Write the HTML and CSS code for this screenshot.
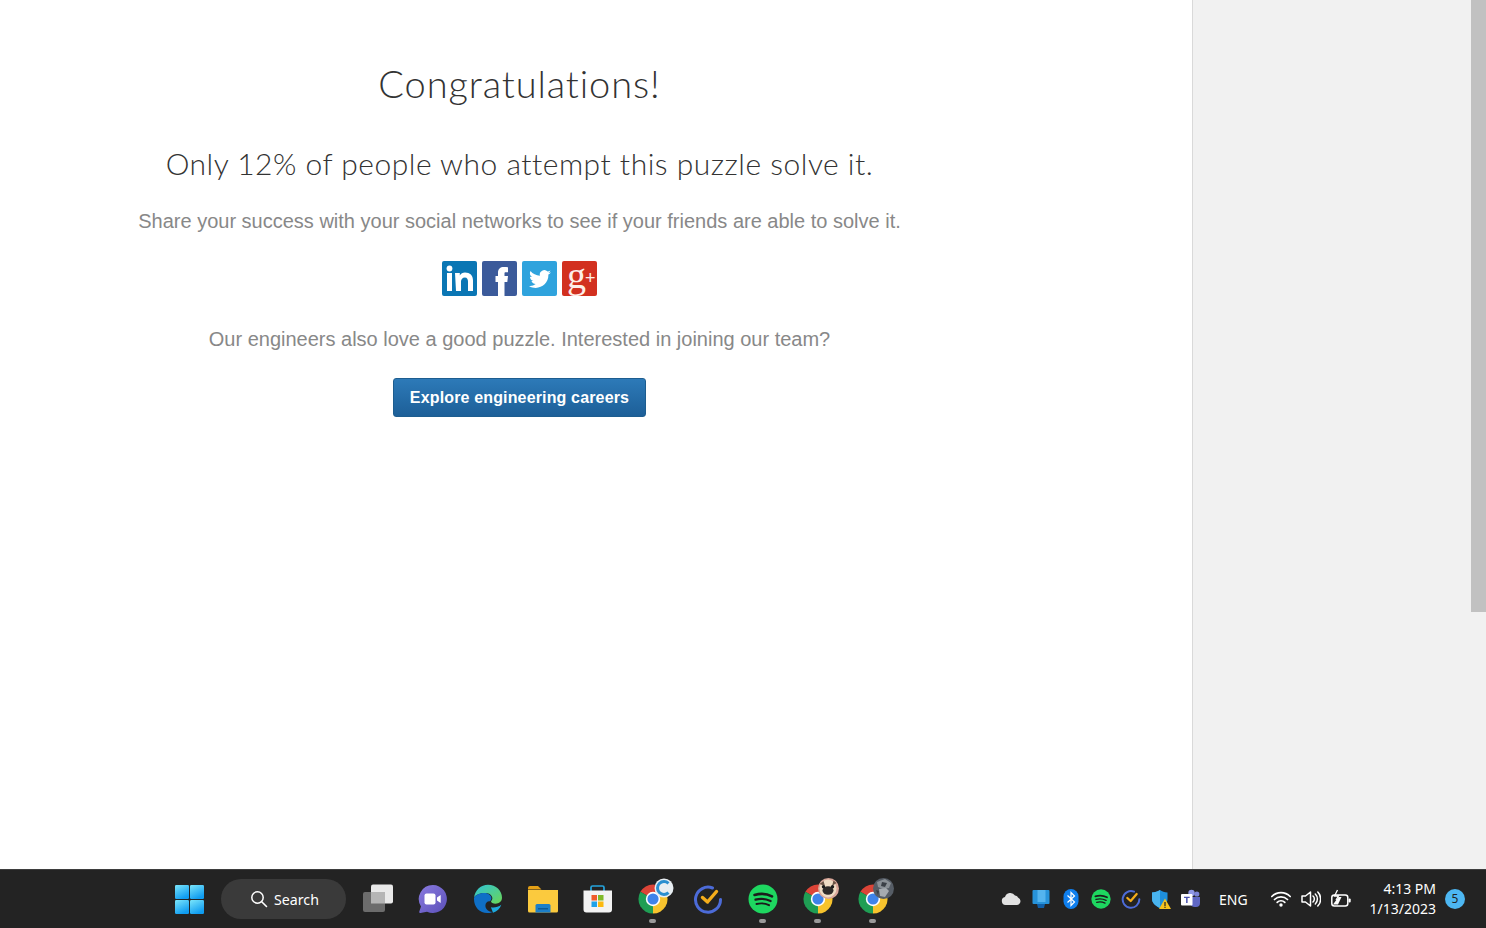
FILE: index.html
```html
<!DOCTYPE html>
<html lang="en">
<head>
<meta charset="utf-8">
<title>Congratulations</title>
<link rel="stylesheet" href="styles.css">
</head>
<body>
<svg class="defs" width="0" height="0" aria-hidden="true">
  <defs>
    <linearGradient id="winG" x1="0" y1="0" x2="0.500" y2="1"><stop offset="0" stop-color="#7be6fb"/><stop offset="1" stop-color="#0f9cf0"/></linearGradient>
    <linearGradient id="meetG" x1="0" y1="0" x2="1" y2="1"><stop offset="0" stop-color="#8a7be0"/><stop offset="1" stop-color="#5b50b8"/></linearGradient>
    <linearGradient id="edgeG" x1="0" y1="0" x2="1" y2="1"><stop offset="0" stop-color="#2fc3d8"/><stop offset="1" stop-color="#6ad655"/></linearGradient>
    <symbol id="chrome" viewBox="0 0 30 30">
      <path d="M15 15 L2.400 7.700 A14.600 14.600 0 0 1 27.600 7.700 Z" fill="#dc4437"/>
      <path d="M15 15 L27.600 7.700 A14.600 14.600 0 0 1 15 29.600 Z" fill="#f7c32d"/>
      <path d="M15 15 L15 29.600 A14.600 14.600 0 0 1 2.400 7.700 Z" fill="#1f9e54"/>
      <circle cx="15" cy="15" r="7.200" fill="#fff"/>
      <circle cx="15" cy="15" r="5.600" fill="#3f83ea"/>
    </symbol>
    <symbol id="tick" viewBox="0 0 30 30">
      <path d="M19.500 4 A12.500 12.500 0 1 0 27.500 15.500" fill="none" stroke="#4c6bd8" stroke-width="3" stroke-linecap="round"/>
      <path d="M9.500 13.500 L14.500 18 L23.500 7.500" fill="none" stroke="#f5ad1b" stroke-width="3.400" stroke-linecap="round" stroke-linejoin="round"/>
    </symbol>
    <symbol id="spotify" viewBox="0 0 30 30">
      <circle cx="15" cy="15" r="14.500" fill="#1ed760"/>
      <path d="M6.500 11 C12 9.400 19 9.800 24 12.400" fill="none" stroke="#1b1b1b" stroke-width="2.600" stroke-linecap="round"/>
      <path d="M7.500 15.600 C12 14.400 18 14.800 22.600 17" fill="none" stroke="#1b1b1b" stroke-width="2.200" stroke-linecap="round"/>
      <path d="M8.500 20 C12.500 19 17.500 19.400 21 21.200" fill="none" stroke="#1b1b1b" stroke-width="1.900" stroke-linecap="round"/>
    </symbol>
  </defs>
</svg>

<div class="screen">
  <div class="page">
    <main class="main">
      <section class="content">
        <h1 class="title">Congratulations!</h1>
        <h2 class="subtitle">Only 12% of people who attempt this puzzle solve it.</h2>
        <p class="copy share">Share your success with your social networks to see if your friends are able to solve it.</p>
        <div class="socials">
          <a class="social linkedin" aria-label="LinkedIn"><svg viewBox="0 0 35 35" width="35" height="35"><circle cx="7.500" cy="7.500" r="2.900" fill="#fff"/><rect x="5" y="12" width="5" height="18" fill="#fff"/><path d="M13 12h4.800v2.500c1-1.700 2.900-2.900 5.200-2.900 5 0 8 2.800 8 8V30h-5v-9.400c0-2.500-.9-4.200-3.100-4.200-2.300 0-3.900 1.700-3.900 4.200V30h-5z" fill="#fff"/></svg></a>
          <a class="social facebook" aria-label="Facebook"><svg viewBox="0 0 35 35" width="35" height="35"><path d="M16 35V21h-2.500v-6H16v-3.500C16 8 18.300 6 21.800 6c1.800 0 3.700.2 4.200.3v5h-2.500c-.9 0-1 .6-1 1.500V15H26l-.7 6H22.500v14z" fill="#fff"/></svg></a>
          <a class="social twitter" aria-label="Twitter"><svg viewBox="0 0 35 35" width="35" height="35"><path d="M29 12.300c-.9.400-1.700.6-2.600.7.900-.6 1.700-1.500 2-2.500-.9.500-1.800.9-2.800 1.100a4.500 4.500 0 0 0-7.700 4.100c-3.700-.2-7.200-1.900-9.400-4.700-1.200 2-.6 4.600 1.400 6-.7 0-1.400-.2-2-.6 0 2.200 1.500 4.100 3.600 4.500-.7.200-1.400.2-2 .1.600 1.800 2.300 3.100 4.200 3.100-1.900 1.500-4.400 2.100-6.700 1.800 8.200 5.200 19.700-.3 19.400-11.300.9-.5 1.700-1.200 2.600-2.300z" fill="#fff" transform="translate(0 -1)"/></svg></a>
          <a class="social gplus" aria-label="Google Plus"><span class="gplus-g">g</span><span class="gplus-plus">+</span></a>
        </div>
        <p class="copy join">Our engineers also love a good puzzle. Interested in joining our team?</p>
        <a class="careers">Explore engineering careers</a>
      </section>
    </main>
    <aside class="side"></aside>
    <div class="scrollbar"><div class="thumb"></div></div>
  </div>

  <footer class="taskbar">
    <div class="apps">
      <div class="app app-win">
        <svg viewBox="0 0 29 29" width="29" height="29"><rect x="0" y="0" width="14" height="14" rx="1.200" fill="url(#winG)"/><rect x="15" y="0" width="14" height="14" rx="1.200" fill="url(#winG)"/><rect x="0" y="15" width="14" height="14" rx="1.200" fill="url(#winG)"/><rect x="15" y="15" width="14" height="14" rx="1.200" fill="url(#winG)"/></svg>
      </div>
      <div class="search">
        <svg viewBox="0 0 18 18" width="18" height="18"><circle cx="7.500" cy="7.500" r="5.700" fill="none" stroke="#fff" stroke-width="1.500"/><path d="M11.700 11.700 L16.500 16.500" stroke="#fff" stroke-width="1.600" stroke-linecap="round"/></svg>
        <span>Search</span>
      </div>
      <div class="app">
        <svg viewBox="0 0 30 30" width="30" height="30"><rect x="8" y="0.500" width="22" height="19" rx="2" fill="#e9e9e9"/><rect x="0" y="8" width="22" height="20" rx="2" fill="#6c6c6c"/><rect x="8" y="8" width="14" height="11.500" fill="#b5b5b5"/></svg>
      </div>
      <div class="app">
        <svg viewBox="0 0 30 30" width="30" height="30"><path d="M15 1a14 14 0 1 1-6 26.700L2.500 29 C1.500 29 1 28.400 1.300 27.500 L3 22.500 A14 14 0 0 1 15 1z" fill="url(#meetG)"/><rect x="6.500" y="9.500" width="11" height="11" rx="2" fill="#fff"/><path d="M19 13.500l3.700-2.600v8.200l-3.700-2.600z" fill="#fff"/></svg>
      </div>
      <div class="app">
        <svg viewBox="0 0 30 30" width="30" height="30"><path d="M1 14C2 6 8 .8 15 .8c8 0 14 6 14 12.700 0 4-3 6.200-6.500 6.200-2.500 0-4.500-1-4.500-2.400 3.500-3.200 0-8.300-5.500-8.300C7 9 2.500 10.500 1 14z" fill="url(#edgeG)"/><path d="M1 14c1.500-3.500 6-5 10.500-5 5.500 0 9 5 5.500 8.300-2.400-.8-5.600 2-4.300 6.200.7 2.300 3.800 4.800 7 4.400C10 32 .4 25 1 14z" fill="#0f6fc6"/><path d="M20 28.700c4-1.300 7-4.300 8.300-8-3 2.500-7.300 3.200-10.400 2.500z" fill="#1da9de"/></svg>
      </div>
      <div class="app">
        <svg viewBox="0 0 30 30" width="30" height="30"><path d="M0 4a2 2 0 0 1 2-2h8l3.500 3.500H0z" fill="#e6a116"/><path d="M0 6h30v21a1.500 1.500 0 0 1-1.500 1.500h-27A1.500 1.500 0 0 1 0 27z" fill="#fbca3e"/><path d="M9 20h12a1.500 1.500 0 0 1 1.500 1.500v7h-15v-7A1.500 1.500 0 0 1 9 20z" fill="#1c7fc9"/><rect x="10" y="24" width="10" height="1.500" fill="#0c5b99"/></svg>
      </div>
      <div class="app">
        <svg viewBox="0 0 30 30" width="30" height="30"><path d="M8 7V3.500A1.500 1.500 0 0 1 9.500 2h10A1.500 1.500 0 0 1 21 3.500V7" fill="none" stroke="#25a4dd" stroke-width="1.700"/><path d="M0.500 6.500h28.500v19a3 3 0 0 1-3 3H3.500a3 3 0 0 1-3-3z" fill="#f3f3f3"/><rect x="8.500" y="11" width="5.500" height="5.500" fill="#ef5c2b"/><rect x="15" y="11" width="5.500" height="5.500" fill="#7fba29"/><rect x="8.500" y="17.500" width="5.500" height="5.500" fill="#1fa2e8"/><rect x="15" y="17.500" width="5.500" height="5.500" fill="#fcb90f"/></svg>
      </div>
      <div class="app has-dot">
        <svg viewBox="0 0 30 30" width="30" height="30"><use href="#chrome"/></svg>
        <span class="badge badge-c"><svg viewBox="0 0 20 20" width="20" height="20"><circle cx="10" cy="10" r="9.500" fill="#e8eef2"/><path d="M14.500 5.300A6.500 6.500 0 1 0 14.500 14.700" fill="none" stroke="#2a8fd0" stroke-width="3"/></svg></span>
      </div>
      <div class="app">
        <svg viewBox="0 0 30 30" width="30" height="30"><use href="#tick"/></svg>
      </div>
      <div class="app has-dot">
        <svg viewBox="0 0 30 30" width="30" height="30"><use href="#spotify"/></svg>
      </div>
      <div class="app has-dot">
        <svg viewBox="0 0 30 30" width="30" height="30"><use href="#chrome"/></svg>
        <span class="badge"><svg viewBox="0 0 21 21" width="21" height="21"><circle cx="10.500" cy="10.500" r="10.500" fill="#d9a79a"/><ellipse cx="10" cy="10.500" rx="8.500" ry="9" fill="#efdcc4"/><path d="M1.500 6l4-3 1.500 5zM18.500 5l-3-2.500-1.500 5.500z" fill="#6d5647"/><ellipse cx="10" cy="12.500" rx="5.500" ry="4.200" fill="#2f2b29"/><circle cx="5.500" cy="8.800" r="1.700" fill="#1a1a1a"/><circle cx="14.500" cy="8.800" r="1.700" fill="#1a1a1a"/></svg></span>
      </div>
      <div class="app has-dot">
        <svg viewBox="0 0 30 30" width="30" height="30"><use href="#chrome"/></svg>
        <span class="badge"><svg viewBox="0 0 21 21" width="21" height="21"><circle cx="10.500" cy="10.500" r="10.500" fill="#565d66"/><path d="M4 4l8-3 6 4-2 5-6 1-5-2z" fill="#8a9096"/><path d="M6 11l7-1 3 3-4 6-5-1z" fill="#a6abb0"/><path d="M9 4l5 1-2 4-4-1zM3 12l3 1-1 4z" fill="#3a3f46"/></svg></span>
      </div>
    </div>

    <div class="tray">
      <div class="tray-icons">
        <div class="ti"><svg viewBox="0 0 20 20" width="20" height="20"><path d="M4.500 16a4 4 0 0 1-.5-7.900 5.500 5.500 0 0 1 10-1.500 4.600 4.600 0 0 1 3 1.800 4 4 0 0 1 2.500 3.600c0 2.300-1.500 4-3.800 4z" fill="#e2e2e2"/></svg></div>
        <div class="ti"><svg viewBox="0 0 20 20" width="20" height="20"><rect x="1.500" y="1" width="17" height="14" rx="1" fill="#2793da"/><rect x="6.500" y="1" width="8" height="12" fill="#54b4ee"/><path d="M6 15h8l-1 4H7z" fill="#0f5fa8"/></svg></div>
        <div class="ti"><svg viewBox="0 0 20 20" width="20" height="20"><rect x="2.500" y="0" width="15" height="20" rx="7.500" fill="#0f7fee"/><path d="M6.500 6.500l7 6.500-3.500 3.500V3.500L13.500 7l-7 6.500" fill="none" stroke="#fff" stroke-width="1.200"/></svg></div>
        <div class="ti"><svg viewBox="0 0 30 30" width="20" height="20"><use href="#spotify"/></svg></div>
        <div class="ti"><svg viewBox="0 0 30 30" width="20" height="20"><use href="#tick"/></svg></div>
        <div class="ti"><svg viewBox="0 0 20 20" width="20" height="20"><path d="M9 1c2 1.500 4.500 2.300 7.500 2.500V10c0 4-3 7-7.500 9C4.500 17 1 14 1 10V3.500C4 3.300 6.700 2.500 9 1z" fill="#1e8fdc"/><path d="M9 1v18C4.500 17 1 14 1 10V3.500C4 3.300 6.700 2.500 9 1z" fill="#49b4ee"/><path d="M14 9.500l6 10.500H8z" fill="#f6c21c"/><rect x="13.400" y="13" width="1.200" height="4" fill="#222"/><rect x="13.400" y="17.700" width="1.200" height="1.200" fill="#222"/></svg></div>
        <div class="ti"><svg viewBox="0 0 20 20" width="20" height="20"><circle cx="15.800" cy="5" r="2.600" fill="#7b83d6"/><circle cx="10.500" cy="4" r="3.200" fill="#8f97e6"/><path d="M8 8h11v6a4 4 0 0 1-4 4h-1a5 5 0 0 1-5-4z" fill="#5f67c4"/><rect x="0" y="5" width="11.500" height="11.500" rx="1" fill="#fff"/><path d="M3 7.700h5.700v1.400H6.600v5H5.100v-5H3z" fill="#4a52b0"/></svg></div>
      </div>
      <span class="lang">ENG</span>
      <div class="sys-icons">
        <div class="ti"><svg viewBox="0 0 20 20" width="20" height="20"><path d="M0.800 7.500a13 13 0 0 1 18.400 0M3.500 10.500a9.200 9.200 0 0 1 13 0M6.200 13.300a5.400 5.400 0 0 1 7.600 0" fill="none" stroke="#fff" stroke-width="1.700" stroke-linecap="round"/><circle cx="10" cy="16" r="1.700" fill="#fff"/></svg></div>
        <div class="ti"><svg viewBox="0 0 20 20" width="20" height="20"><path d="M1 7h3.500L9.500 3v14l-5-4H1z" fill="none" stroke="#fff" stroke-width="1.500" stroke-linejoin="round"/><path d="M12 7a4 4 0 0 1 0 6M14.300 5a7 7 0 0 1 0 10M16.800 3a10 10 0 0 1 0 14" fill="none" stroke="#fff" stroke-width="1.500" stroke-linecap="round"/></svg></div>
        <div class="ti"><svg viewBox="0 0 20 20" width="20" height="20"><rect x="0.800" y="6" width="16" height="11" rx="2.500" fill="none" stroke="#fff" stroke-width="1.500"/><rect x="17.500" y="9.500" width="2.200" height="4" rx="1" fill="#fff"/><path d="M2 15.500L7.500 8h3L7 15.500z" fill="#fff"/><path d="M6.500 1L3.500 7h4L5 11" fill="none" stroke="#fff" stroke-width="1.300"/></svg></div>
      </div>
      <div class="clock"><span>4:13 PM</span><span>1/13/2023</span></div>
      <span class="notif">5</span>
    </div>
  </footer>
</div>
</body>
</html>
```

FILE: styles.css
```css
html, body { margin: 0; padding: 0; height: 100%; overflow: hidden; background: #fff; }
.defs { position: absolute; }

.screen { display: flex; flex-direction: column; width: 1486px; height: 928px; }
.page { display: flex; flex: 1; min-height: 0; }

.main { width: 1192px; background: #fff; }
.content { width: 1039px; text-align: center; padding-top: 60px; }

.title { margin: 0; font: 300 38px/46px Lato, sans-serif; color: #333; letter-spacing: 0.9px; }
.subtitle { margin: 39px 0 0; font: 300 30px/36px Lato, sans-serif; color: #333; letter-spacing: 0.5px; }
.copy { margin: 0; font: 400 20px/26px "Liberation Sans", Arial, sans-serif; color: #888; }
.share { margin-top: 27px; }
.join { margin-top: 30px; }

.socials { display: flex; justify-content: center; gap: 5px; margin-top: 27px; }
.social { display: block; width: 35px; height: 35px; border-radius: 2px; position: relative; }
.linkedin { background: #0a76b4; }
.facebook { background: #3b5a9a; }
.twitter { background: #2fa3dd; }
.gplus { background: #d2301f; display: flex; align-items: center; color: #fdeee8; padding-left: 5px; box-sizing: border-box; }
.gplus-g { font: 400 38px/30px "Liberation Serif", serif; margin-top: -8px; }
.gplus-plus { font: 400 18px/18px "Liberation Sans", sans-serif; margin-top: -2px; margin-left: -1px; }

.careers { display: inline-block; margin-top: 26px; box-sizing: border-box; width: 253px; height: 39px; border: 1px solid #1d5d8f; border-radius: 3px; background: linear-gradient(#2d7ab8, #1d5f98); color: #fff; font: 700 16px/37px "Liberation Sans", Arial, sans-serif; letter-spacing: 0.15px; }

.side { flex: 1; background: #f1f1f1; border-left: 1px solid #d9d9d9; }
.scrollbar { width: 15px; background: #f1f1f1; }
.thumb { height: 612px; background: #c1c1c1; }

.taskbar { height: 59px; box-sizing: border-box; border-top: 1px solid #3e3e3e; background: #232323; display: flex; align-items: center; position: relative; }
.apps { display: flex; align-items: center; margin-left: 175px; }
.app { width: 30px; height: 30px; margin-right: 25px; position: relative; }
.app svg { display: block; }
.app-win { width: 29px; height: 29px; margin-right: 17px; }
.has-dot::after { content: ""; position: absolute; left: 11px; top: 35px; width: 7px; height: 4px; border-radius: 2px; background: #9a9a9a; }
.badge { position: absolute; left: 15px; top: -6px; width: 21px; height: 21px; }
.badge-c { left: 16px; }

.search { width: 125px; height: 40px; border-radius: 20px; background: #3a3a3a; display: flex; align-items: center; gap: 6px; padding-left: 29px; box-sizing: border-box; margin-right: 17px; color: #fff; font: 400 14.200px "Noto Sans", sans-serif; }
.search svg { flex: none; }

.tray { position: absolute; left: 1001px; top: 0; bottom: 0; right: 0; display: flex; align-items: center; color: #fff; }
.tray-icons { display: flex; gap: 10px; }
.sys-icons { display: flex; gap: 10px; margin-left: 19px; }
.ti { width: 20px; height: 20px; }
.ti svg { display: block; }
.lang { margin-left: 18px; font: 400 14px "Noto Sans", sans-serif; width: 33px; }
.clock { display: flex; flex-direction: column; align-items: flex-end; margin-left: 20px; width: 65px; font: 400 14px/20px "Noto Sans", sans-serif; }
.notif { margin-left: 9px; width: 20px; height: 20px; border-radius: 50%; background: #4db7f2; color: #222; font: 400 12px/20px "Noto Sans", sans-serif; text-align: center; }
```
